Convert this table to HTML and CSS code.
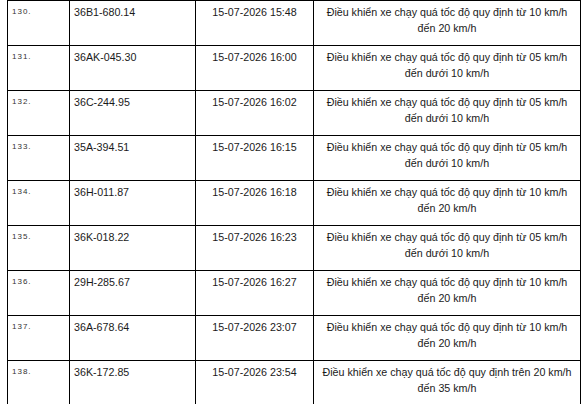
FILE: index.html
```html
<!DOCTYPE html>
<html lang="vi">
<head>
<meta charset="utf-8">
<link rel="stylesheet" href="styles.css">
</head>
<body>
<table class="list">
  <colgroup>
    <col class="c-no"><col class="c-plate"><col class="c-time"><col class="c-desc">
  </colgroup>
  <tbody>
    <tr><td class="no">130.</td><td class="plate">36B1-680.14</td><td class="time">15-07-2026 15:48</td><td class="desc">Điều khiển xe chạy quá tốc độ quy định từ 10 km/h đến 20 km/h</td></tr>
    <tr><td class="no">131.</td><td class="plate">36AK-045.30</td><td class="time">15-07-2026 16:00</td><td class="desc">Điều khiển xe chạy quá tốc độ quy định từ 05 km/h đến dưới 10 km/h</td></tr>
    <tr><td class="no">132.</td><td class="plate">36C-244.95</td><td class="time">15-07-2026 16:02</td><td class="desc">Điều khiển xe chạy quá tốc độ quy định từ 05 km/h đến dưới 10 km/h</td></tr>
    <tr><td class="no">133.</td><td class="plate">35A-394.51</td><td class="time">15-07-2026 16:15</td><td class="desc">Điều khiển xe chạy quá tốc độ quy định từ 05 km/h đến dưới 10 km/h</td></tr>
    <tr><td class="no">134.</td><td class="plate">36H-011.87</td><td class="time">15-07-2026 16:18</td><td class="desc">Điều khiển xe chạy quá tốc độ quy định từ 10 km/h đến 20 km/h</td></tr>
    <tr><td class="no">135.</td><td class="plate">36K-018.22</td><td class="time">15-07-2026 16:23</td><td class="desc">Điều khiển xe chạy quá tốc độ quy định từ 05 km/h đến dưới 10 km/h</td></tr>
    <tr><td class="no">136.</td><td class="plate">29H-285.67</td><td class="time">15-07-2026 16:27</td><td class="desc">Điều khiển xe chạy quá tốc độ quy định từ 10 km/h đến 20 km/h</td></tr>
    <tr><td class="no">137.</td><td class="plate">36A-678.64</td><td class="time">15-07-2026 23:07</td><td class="desc">Điều khiển xe chạy quá tốc độ quy định từ 10 km/h đến 20 km/h</td></tr>
    <tr><td class="no">138.</td><td class="plate">36K-172.85</td><td class="time">15-07-2026 23:54</td><td class="desc">Điều khiển xe chạy quá tốc độ quy định trên 20 km/h đến 35 km/h</td></tr>
  </tbody>
</table>
</body>
</html>
```
FILE: styles.css
```css
html, body {
  margin: 0;
  padding: 0;
  background: #ffffff;
}

body {
  font-family: "Liberation Sans", Arial, sans-serif;
  color: #1a1a1a;
}

.list {
  margin-left: 7px;
  width: 573px;
  border-collapse: collapse;
  table-layout: fixed;
}

.c-no { width: 62px; }
.c-plate { width: 126px; }
.c-time { width: 118px; }
.c-desc { width: 267px; }

.list tr {
  height: 45px;
}

.list td {
  border: 1px solid #000;
  padding: 3px 4px 0;
  vertical-align: top;
  font-size: 10.7px;
  line-height: 16px;
}

.list td.no {
  font-size: 8px;
  letter-spacing: 1px;
  color: #333;
  padding-left: 4px;
}

.list td.time,
.list td.desc {
  text-align: center;
}
```
